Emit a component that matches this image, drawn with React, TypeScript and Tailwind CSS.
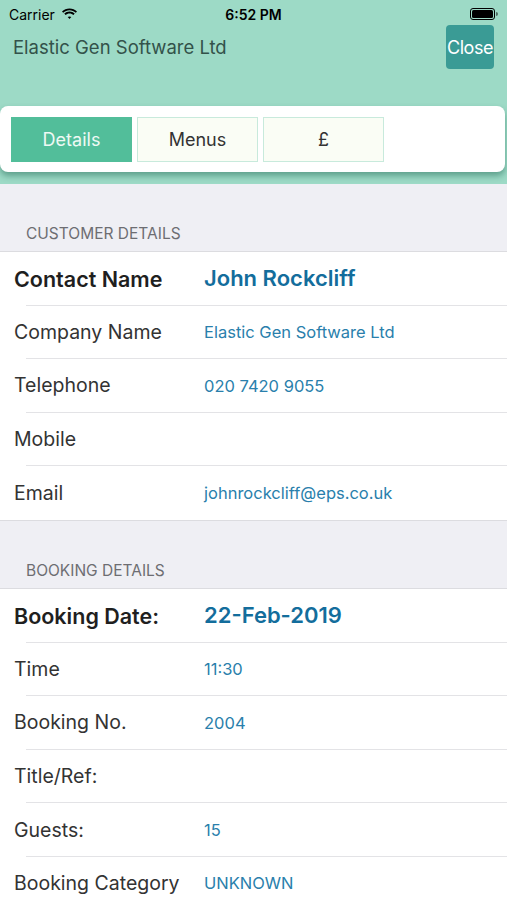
import React from "react";

type Row = {
  label: string;
  value?: string;
  strong?: boolean;
};

const customerRows: Row[] = [
  { label: "Contact Name", value: "John Rockcliff", strong: true },
  { label: "Company Name", value: "Elastic Gen Software Ltd" },
  { label: "Telephone", value: "020 7420 9055" },
  { label: "Mobile" },
  { label: "Email", value: "johnrockcliff@eps.co.uk" },
];

const bookingRows: Row[] = [
  { label: "Booking Date:", value: "22-Feb-2019", strong: true },
  { label: "Time", value: "11:30" },
  { label: "Booking No.", value: "2004" },
  { label: "Title/Ref:" },
  { label: "Guests:", value: "15" },
  { label: "Booking Category", value: "UNKNOWN" },
];

function StatusBar() {
  return (
    <div className="relative flex h-[28px] items-center px-[9px] text-[14px] text-black">
      <div className="flex items-center gap-[6px]">
        <span>Carrier</span>
        <svg width="17" height="12" viewBox="0 0 17 12" fill="black">
          <path d="M8.5 2.2c2.4 0 4.6.9 6.3 2.5l1.2-1.3C14 1.5 11.4.4 8.5.4S3 1.5 1 3.4l1.2 1.3C3.9 3.1 6.1 2.2 8.5 2.2z" />
          <path d="M8.5 5.4c1.5 0 2.9.6 4 1.5l1.2-1.3C12.3 4.4 10.5 3.6 8.5 3.6S4.7 4.4 3.3 5.6l1.2 1.3c1.1-.9 2.5-1.5 4-1.5z" />
          <path d="M8.5 8.5c.7 0 1.3.2 1.8.6L8.5 11 6.7 9.1c.5-.4 1.1-.6 1.8-.6z" />
        </svg>
      </div>
      <span className="absolute left-1/2 -translate-x-1/2 font-semibold">6:52 PM</span>
      <div className="ml-auto flex items-center">
        <div className="h-[12px] w-[25px] rounded-[3px] border border-black p-[1px]">
          <div className="h-full w-full rounded-[1.5px] bg-black" />
        </div>
        <div className="ml-[1px] h-[4px] w-[2px] rounded-r-sm bg-black/50" />
      </div>
    </div>
  );
}

function ListRow({ row, last }: { row: Row; last: boolean }) {
  return (
    <div className="relative flex h-[53.6px] items-center pl-[14px]">
      {row.strong ? (
        <span className="w-[190px] shrink-0 text-[21.5px] font-semibold text-[#1f1f1f]">
          {row.label}
        </span>
      ) : (
        <span className="w-[190px] shrink-0 text-[19.5px] text-[#333]">{row.label}</span>
      )}
      {row.value &&
        (row.strong ? (
          <span className="text-[22px] font-semibold text-[#136d9c]">{row.value}</span>
        ) : (
          <span className="text-[16.5px] text-[#2a7fac]">{row.value}</span>
        ))}
      {!last && <div className="absolute bottom-0 left-[26px] right-0 h-px bg-[#e3e3e6]" />}
    </div>
  );
}

function Section({ title, rows }: { title: string; rows: Row[] }) {
  return (
    <div>
      <div className="flex h-[67px] items-end bg-[#efeff4] pb-[6px] pl-[26px] text-[15.5px] text-[#6d6d72]">
        {title}
      </div>
      <div className="border-y border-[#dcdce0] bg-white">
        {rows.map((r, i) => (
          <ListRow key={r.label} row={r} last={i === rows.length - 1} />
        ))}
      </div>
    </div>
  );
}

export default function App() {
  const tabs = ["Details", "Menus", "£"];

  return (
    <div
      className="h-[900px] w-[507px] overflow-hidden bg-[#efeff4]"
      style={{ fontFamily: "Inter, 'Liberation Sans', sans-serif" }}
    >
      <div className="bg-[#9ddac6]">
        <StatusBar />
        <div className="flex h-[78px] items-start px-[13px]">
          <span className="mt-[6px] text-[18.5px] text-[#33524a]">Elastic Gen Software Ltd</span>
          <button
            type="button"
            className="ml-auto -mt-[3px] flex h-[44px] w-[48px] items-center justify-center rounded-[4px] bg-[#3a9b95] text-[18px] tracking-tight text-white"
          >
            Close
          </button>
        </div>
        <div className="pb-[12px] pr-[2px]">
          <div className="flex h-[66px] items-center gap-[5px] rounded-[8px] bg-white px-[11px] shadow-[0_4px_6px_rgba(20,90,70,0.45)]">
            {tabs.map((t, i) => (
              <div
                key={t}
                className={
                  i === 0
                    ? "flex h-[45px] w-[121px] items-center justify-center bg-[#52be9a] text-[18px] text-[#eef9f4]"
                    : "flex h-[45px] w-[121px] items-center justify-center border border-[#c8eadc] bg-[#fafdf5] text-[18px] text-[#333]"
                }
              >
                {t}
              </div>
            ))}
          </div>
        </div>
      </div>
      <Section title="CUSTOMER DETAILS" rows={customerRows} />
      <Section title="BOOKING DETAILS" rows={bookingRows} />
    </div>
  );
}
